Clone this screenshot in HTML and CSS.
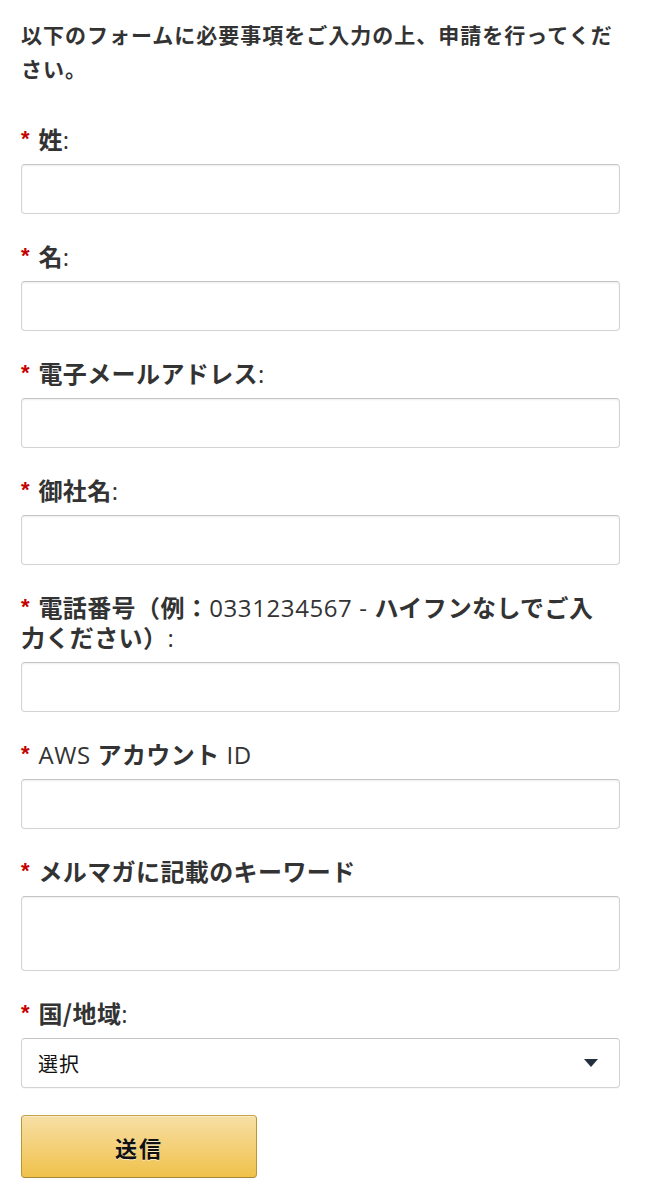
FILE: index.html
```html
<!DOCTYPE html>
<html lang="ja">
<head>
<meta charset="utf-8">
<title>申請フォーム</title>
<link rel="stylesheet" href="styles.css">
</head>
<body>
<form class="form">
  <p class="intro">以下のフォームに必要事項をご入力の上、申請を行ってください。</p>

  <div class="field">
    <label class="label"><span class="req">*</span> 姓<span class="lat">:</span></label>
    <div class="input"></div>
  </div>

  <div class="field">
    <label class="label"><span class="req">*</span> 名<span class="lat">:</span></label>
    <div class="input"></div>
  </div>

  <div class="field">
    <label class="label"><span class="req">*</span> 電子メールアドレス<span class="lat">:</span></label>
    <div class="input"></div>
  </div>

  <div class="field">
    <label class="label"><span class="req">*</span> 御社名<span class="lat">:</span></label>
    <div class="input"></div>
  </div>

  <div class="field">
    <label class="label"><span class="req">*</span> 電話番号（例：<span class="lat">0331234567 - </span>ハイフンなしでご入<br>力ください）<span class="lat">:</span></label>
    <div class="input"></div>
  </div>

  <div class="field">
    <label class="label"><span class="req">*</span> <span class="lat">AWS </span>アカウント<span class="lat"> ID</span></label>
    <div class="input"></div>
  </div>

  <div class="field">
    <label class="label"><span class="req">*</span> メルマガに記載のキーワード</label>
    <div class="input tall"></div>
  </div>

  <div class="field">
    <label class="label"><span class="req">*</span> 国/地域<span class="lat">:</span></label>
    <div class="input select">
      <span class="select-text">選択</span>
      <svg class="caret" width="14" height="8" viewBox="0 0 14 8"><path d="M0 0 H14 L7 8 Z" fill="#232f3e"/></svg>
    </div>
  </div>

  <div class="actions">
    <button type="button" class="submit">送信</button>
  </div>
</form>
</body>
</html>
```

FILE: styles.css
```css
html, body {
  margin: 0;
  padding: 0;
  background: #fff;
}

body {
  font-family: "Open Sans", "Noto Sans CJK JP", sans-serif;
  color: #333;
}

.form {
  display: flex;
  flex-direction: column;
  padding: 17px 30px 20px 21px;
}

.intro {
  margin: 0 0 39px 0;
  font-family: "Noto Sans CJK JP", sans-serif;
  font-weight: 700;
  font-size: 21px;
  line-height: 34px;
  letter-spacing: 1px;
  color: #333;
  width: 600px;
}

.field {
  display: flex;
  flex-direction: column;
  margin-bottom: 27px;
  width: 599px;
}

.label {
  font-family: "Noto Sans CJK JP", sans-serif;
  font-weight: 700;
  font-size: 24px;
  line-height: 30px;
  letter-spacing: 0.4px;
  margin-bottom: 10px;
  color: #333;
}

.label .lat {
  font-family: "Open Sans", sans-serif;
  font-weight: 400;
  letter-spacing: 0.6px;
  line-height: 0;
}

.req {
  color: #c40000;
  font-family: "Liberation Sans", sans-serif;
  font-weight: 700;
  font-size: 22px;
  letter-spacing: 0;
  line-height: 0;
  margin-right: 3px;
  position: relative;
  top: -3px;
}

.input {
  height: 48px;
  border: 1px solid #d3d3d3;
  border-top-color: #c4c4c4;
  border-radius: 4px;
  background: #fff;
  box-shadow: inset 0 1px 2px rgba(0, 0, 0, 0.07);
}

.input.tall {
  height: 73px;
}

.select {
  display: flex;
  align-items: center;
  justify-content: space-between;
  padding: 0 21px 0 16px;
  box-shadow: 0 1px 1px rgba(0, 0, 0, 0.04);
}

.select-text {
  font-family: "Noto Sans CJK JP", sans-serif;
  font-size: 20px;
  color: #111;
  letter-spacing: 1px;
}

.caret {
  display: block;
}

.actions {
  display: flex;
  margin-top: 0;
}

.submit {
  width: 236px;
  height: 63px;
  border: 1px solid #a88734;
  border-color: #c6a24a #b89634 #a88734;
  border-radius: 4px;
  background: linear-gradient(to bottom, #f7dfa5, #f0c14b);
  font-family: "Noto Sans CJK JP", sans-serif;
  font-weight: 700;
  font-size: 22px;
  letter-spacing: 2px;
  color: #111;
  text-shadow: 0 1px 0 rgba(255, 255, 255, 0.6);
  box-shadow: 0 1px 0 rgba(255, 255, 255, 0.4) inset;
  padding: 0;
}
```
